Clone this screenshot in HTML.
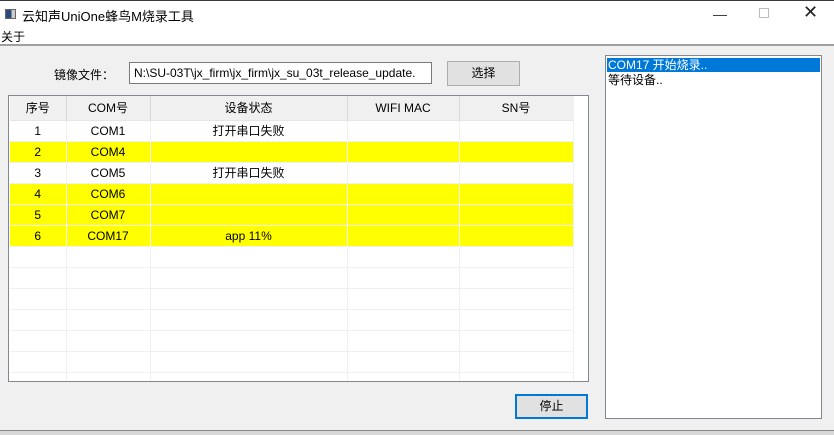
<!DOCTYPE html><html><head><meta charset="utf-8"><style>
*{box-sizing:border-box;margin:0;padding:0}
body{width:834px;height:435px;overflow:hidden;background:#f0f0f0;font-family:"Liberation Sans","Noto Sans CJK SC",sans-serif;font-size:12px;color:#000;position:relative}
.a{position:absolute}
table{border-collapse:collapse;table-layout:fixed}
td{height:21px;border-right:1px solid #f0f0f0;border-bottom:1px solid #f0f0f0;text-align:center;font-size:12px;padding:0;white-space:nowrap}
tr.y td{background:#ffff00;border-right-color:#fff}
th{height:24px;font-weight:normal;background:#f0f0f0;border-right:1px solid #d8d8d8;border-bottom:1px solid #e5e5e5;font-size:12px}
</style></head><body>
<div class="a" style="left:0;top:0;width:834px;height:44px;background:#fff;border-top:1px solid #3a3a3a"></div>
<div class="a" style="left:5px;top:9px;width:11px;height:10px;border:1px solid #666;background:linear-gradient(90deg,#2a4a7a 60%,#ccc 60%)"></div>
<div class="a" style="left:22px;top:6px;font-size:13px">云知声UniOne蜂鸟M烧录工具</div>
<div class="a" style="left:713px;top:6px;font-size:14px;color:#333">—</div>
<div class="a" style="left:759px;top:8px;width:10px;height:10px;border:1px solid #bbb"></div>
<div class="a" style="left:803px;top:2px;font-size:18px;color:#222">✕</div>
<div class="a" style="left:1px;top:28px;font-size:12px">关于</div>
<div class="a" style="left:0;top:44px;width:834px;height:2px;background:#a0a0a0"></div>
<div class="a" style="left:54px;top:66px">镜像文件：</div>
<div class="a" style="left:129px;top:62px;width:303px;height:22px;background:#fff;border:1px solid #7a7a7a;padding:3px 4px;font-size:12px;white-space:nowrap;overflow:hidden">N:\SU-03T\jx_firm\jx_firm\jx_su_03t_release_update.</div>
<div class="a" style="left:447px;top:61px;width:73px;height:25px;background:#e1e1e1;border:1px solid #adadad;text-align:center;line-height:23px">选择</div>
<div class="a" style="left:8px;top:95px;width:581px;height:287px;background:#fff;border:1px solid #828790;overflow:hidden">
<table style="width:563px;margin-left:1px">
<colgroup><col style="width:56px"><col style="width:84px"><col style="width:197px"><col style="width:112px"><col style="width:114px"></colgroup>
<tr><th>序号</th><th>COM号</th><th>设备状态</th><th>WIFI MAC</th><th>SN号</th></tr>
<tr><td>1</td><td>COM1</td><td>打开串口失败</td><td></td><td></td></tr>
<tr class="y"><td>2</td><td>COM4</td><td></td><td></td><td></td></tr>
<tr><td>3</td><td>COM5</td><td>打开串口失败</td><td></td><td></td></tr>
<tr class="y"><td>4</td><td>COM6</td><td></td><td></td><td></td></tr>
<tr class="y"><td>5</td><td>COM7</td><td></td><td></td><td></td></tr>
<tr class="y"><td>6</td><td>COM17</td><td>app 11%</td><td></td><td></td></tr>
<tr><td></td><td></td><td></td><td></td><td></td></tr>
<tr><td></td><td></td><td></td><td></td><td></td></tr>
<tr><td></td><td></td><td></td><td></td><td></td></tr>
<tr><td></td><td></td><td></td><td></td><td></td></tr>
<tr><td></td><td></td><td></td><td></td><td></td></tr>
<tr><td></td><td></td><td></td><td></td><td></td></tr>
<tr><td></td><td></td><td></td><td></td><td></td></tr>
</table>
<div class="a" style="left:564px;top:0;width:1px;height:287px;background:#f0f0f0"></div>
</div>
<div class="a" style="left:515px;top:394px;width:73px;height:25px;background:#e1e1e1;border:2px solid #0078d7;text-align:center;line-height:21px">停止</div>
<div class="a" style="left:605px;top:55px;width:217px;height:364px;background:#fff;border:1px solid #828790"></div>
<div class="a" style="left:607px;top:58px;width:213px;height:14px;background:#0078d7;color:#fff;line-height:14px;padding-left:1px">COM17 开始烧录..</div>
<div class="a" style="left:608px;top:73px;line-height:14px">等待设备..</div>
<div class="a" style="left:0;top:430px;width:834px;height:5px;background:#d8d8d8;border-top:1px solid #888"></div>
</body></html>
